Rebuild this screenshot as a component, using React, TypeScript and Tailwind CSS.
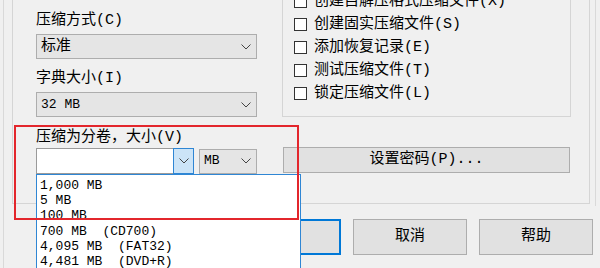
import React from "react";

const font = "font-[family-name:'Liberation_Mono','Noto_Sans_CJK_SC',monospace]";

function Chevron() {
  return (
    <svg width="10" height="6" viewBox="0 0 10 6" className="shrink-0">
      <polyline points="0.5,0.5 5,5 9.5,0.5" fill="none" stroke="#444" strokeWidth="1" />
    </svg>
  );
}

function Select({ children, className = "" }: { children: React.ReactNode; className?: string }) {
  return (
    <div
      className={`flex items-center justify-between h-[25px] border border-[#adadad] bg-[#e5e5e5] pl-[4px] pr-[5px] ${className}`}
    >
      <span>{children}</span>
      <Chevron />
    </div>
  );
}

function Check({ label }: { label: string }) {
  return (
    <div className="flex items-center h-[23px]">
      <div className="w-[13px] h-[13px] border border-[#333] bg-white shrink-0" />
      <span className="ml-[7px] whitespace-nowrap">{label}</span>
    </div>
  );
}

const sizes = [
  "1,000 MB",
  "5 MB",
  "100 MB",
  "700 MB  (CD700)",
  "4,095 MB  (FAT32)",
  "4,481 MB  (DVD+R)",
];

export default function App() {
  return (
    <div className={`relative w-[600px] h-[268px] overflow-hidden bg-[#f0f0f0] pl-[3px] text-[15px] leading-[18px] text-black ${font}`}>
      <div className="w-[593px] h-full border-l border-[#d9d9d9] flex flex-col">
        {/* compression options group */}
        <div className="h-[206px] border-r border-[#d9d9d9] pl-[8px] pr-[5px]">
          <div className="h-[204px] border-x border-b border-[#d5d5d5] flex pl-[23px]">
            {/* left column */}
            <div className="w-[221px] flex flex-col">
              <div className="mt-[12px] h-[18px] whitespace-nowrap">压缩方式(C)</div>
              <Select className="mt-[4px]">标准</Select>
              <div className="mt-[11px] h-[18px] whitespace-nowrap">字典大小(I)</div>
              <Select className="mt-[4px] text-[13px]">32 MB</Select>
              <div className="mt-[12px] h-[18px] whitespace-nowrap">压缩为分卷，大小(V)</div>
              <div className="mt-[1px] flex items-center h-[26px]">
                <div className="flex h-[26px] w-[158px]">
                  <div className="flex-1 border border-r-0 border-[#9a9a9a] bg-white" />
                  <div className="w-[21px] flex items-center justify-center border border-[#2f86d4] bg-[#cce4f7]">
                    <Chevron />
                  </div>
                </div>
                <Select className="ml-[5px] w-[58px] h-[24px] text-[13px]">MB</Select>
              </div>
            </div>

            {/* right column */}
            <div className="ml-[25px] w-[289px] flex flex-col">
              <div className="-mt-[10px] border-x border-b border-[#d5d5d5] pl-[11px] pb-[11px]">
                <Check label="创建自解压格式压缩文件(X)" />
                <Check label="创建固实压缩文件(S)" />
                <Check label="添加恢复记录(E)" />
                <Check label="测试压缩文件(T)" />
                <Check label="锁定压缩文件(L)" />
              </div>
              <button className="mt-[30px] ml-[1px] w-[287px] h-[26px] border border-[#adadad] bg-[#e1e1e1] flex items-center justify-center">
                设置密码(P)...
              </button>
            </div>
          </div>
        </div>

        {/* dialog buttons */}
        <div className="mt-[13px] flex justify-end gap-[12px] pr-[3px]">
          <button className="w-[114px] h-[36px] border-2 border-[#0078d7] bg-[#e1e1e1]">确定</button>
          <button className="w-[114px] h-[36px] border border-[#adadad] bg-[#e1e1e1]">取消</button>
          <button className="w-[114px] h-[36px] border border-[#adadad] bg-[#e1e1e1]">帮助</button>
        </div>
      </div>

      {/* open drop-down list */}
      <div className="absolute left-[36px] top-[174px] w-[265px] h-[110px] bg-white border border-[#2f86d4] pt-[3px] pl-[3px] text-[13px] leading-[15.2px]">
        {sizes.map((s) => (
          <div key={s} className="whitespace-pre">
            {s}
          </div>
        ))}
      </div>

      {/* red highlight annotation */}
      <div className="absolute left-[14px] top-[125px] w-[285px] h-[95px] border-2 border-[#e3262c]" />
    </div>
  );
}
